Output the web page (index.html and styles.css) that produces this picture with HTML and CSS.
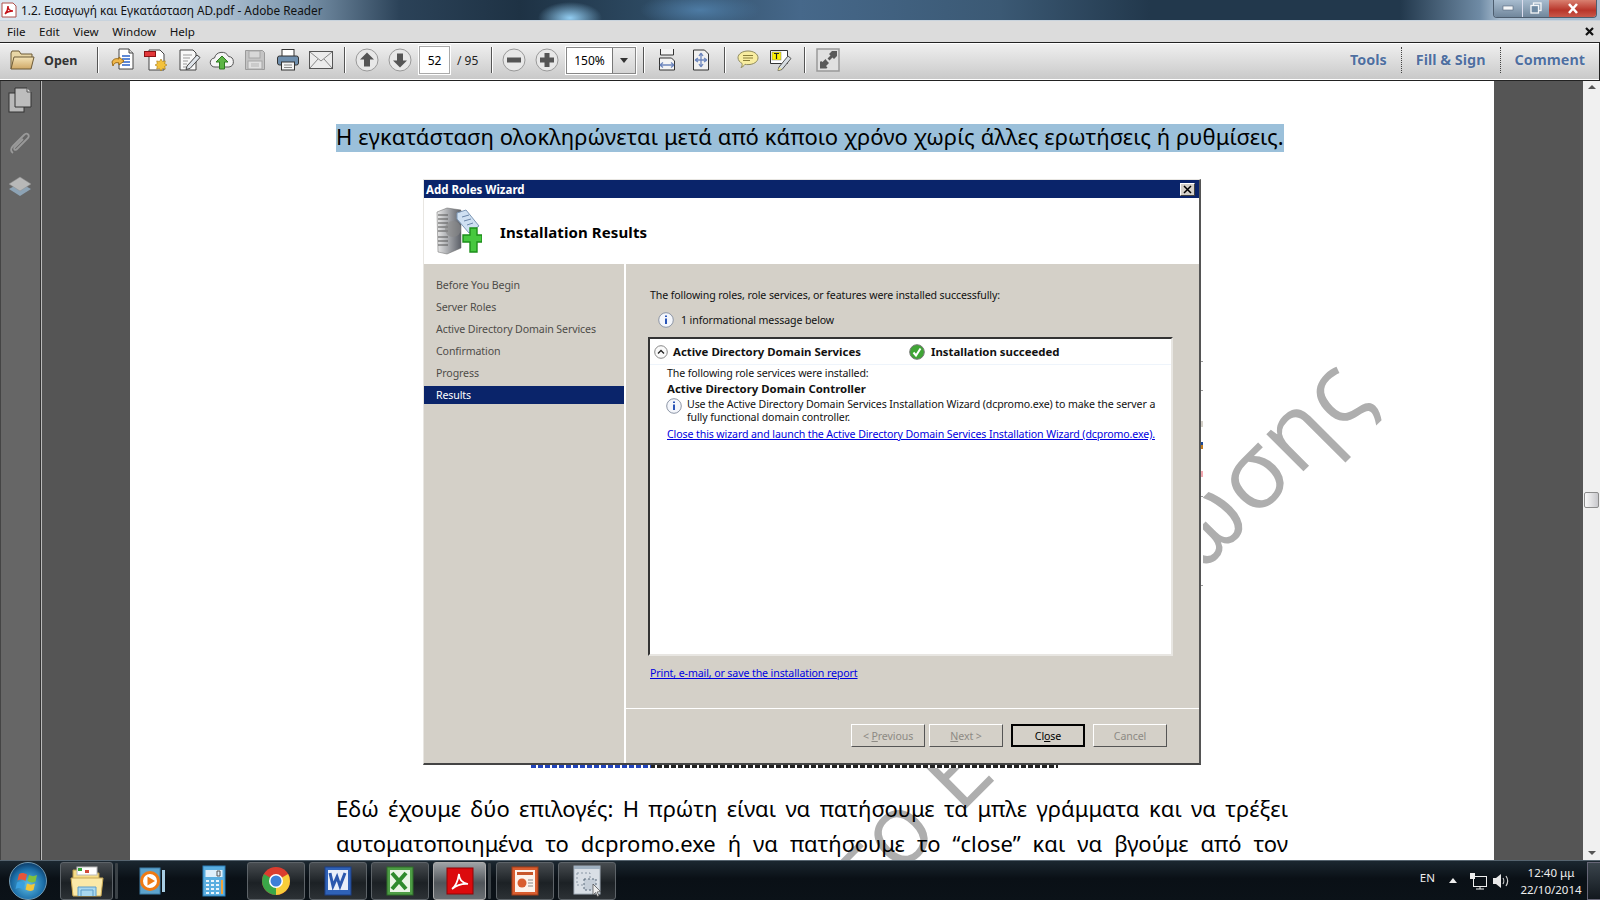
FILE: index.html
```html
<!DOCTYPE html>
<html lang="el">
<head>
<meta charset="utf-8">
<title>Adobe Reader</title>
<link rel="stylesheet" href="styles.css">
</head>
<body>
<header class="titlebar">
  <svg class="app-icon" width="16" height="16" viewBox="0 0 16 16"><path d="M1 1h11l3 3v11H1z" fill="#fff" stroke="#b0504a"/><path d="M4 12c2-2 3-5 3-8 0 3 2 5 5 5-3 0-6 1-8 3z" fill="none" stroke="#c4141a" stroke-width="1.4"/></svg>
  <span class="title-text">1.2. Εισαγωγή και Εγκατάσταση AD.pdf - Adobe Reader</span>
  <div class="win-btns">
    <span class="win-btn win-min"><svg width="12" height="6" viewBox="0 0 12 6"><rect x="1" y="1" width="10" height="4" fill="#f4f6f8" stroke="#56657a" stroke-width=".6"/></svg></span>
    <span class="win-btn win-max"><svg width="12" height="12" viewBox="0 0 12 12"><rect x="3.5" y="1" width="7.500" height="7.500" fill="none" stroke="#f4f6f8" stroke-width="1.3"/><rect x="1" y="3.500" width="7.500" height="7.500" fill="#6f8aa3" stroke="#f4f6f8" stroke-width="1.3"/></svg></span>
    <span class="win-btn win-close"><svg width="12" height="11" viewBox="0 0 12 11"><path d="M2 1l8 9M10 1l-8 9" stroke="#fff" stroke-width="2.600"/></svg></span>
  </div>
</header>

<nav class="menubar">
  <span class="menu-item">File</span><span class="menu-item">Edit</span><span class="menu-item">View</span><span class="menu-item">Window</span><span class="menu-item">Help</span>
  <svg class="menu-close" width="9" height="9" viewBox="0 0 9 9"><path d="M1 1l7 7M8 1l-7 7" stroke="#111" stroke-width="2.200"/></svg>
</nav>

<div class="toolbar">
  <svg class="folder" width="26" height="22" viewBox="0 0 26 22"><defs><linearGradient id="fg" x1="0" y1="0" x2="0" y2="1"><stop offset="0" stop-color="#f4e4b8"/><stop offset="1" stop-color="#cfa866"/></linearGradient></defs><path d="M2 20V4l1-2h7l2 3h11v3" fill="#e8d6a6" stroke="#6d5a36"/><path d="M2 20L5 8h20l-3 12z" fill="url(#fg)" stroke="#6d5a36"/></svg>
  <span class="open-label">Open</span>
  <span class="sep"></span>
  <span class="tb-btn"><svg width="26" height="26" viewBox="0 0 26 26"><path d="M9 2h10l4 4v16H9z" fill="#fff" stroke="#444"/><path d="M19 2v4h4" fill="#ddd" stroke="#444"/><path d="M12 9h8M12 12h8M12 15h8M12 18h8" stroke="#2a62c8" stroke-width="1.300"/><path d="M2 15c1-3 4-4 7-3v-2l5 4-5 4v-2c-3-1-5 0-6 3z" fill="#f1b84a" stroke="#9a6a16"/></svg></span>
  <span class="tb-btn"><svg width="26" height="26" viewBox="0 0 26 26"><path d="M6 3h11l4 4v16H6z" fill="#fff" stroke="#444"/><rect x="1.500" y="4.500" width="11" height="5" fill="#e2373a" stroke="#8a1214"/><path d="M18 12l1.500 2.500 2.800-.6-.6 2.800 2.300 1.300-2.300 1.300.6 2.800-2.800-.6-1.500 2.500-1.500-2.500-2.800.6.6-2.800-2.300-1.300 2.300-1.300-.6-2.800 2.800.6z" fill="#f4c23c" stroke="#a87b12" stroke-width=".6"/></svg></span>
  <span class="tb-btn"><svg width="26" height="26" viewBox="0 0 26 26"><path d="M4 3h13l3 3v17H4z" fill="#f8f8f8" stroke="#444"/><path d="M7 8h9M7 11h7M7 14h5M7 17h4M7 20h3" stroke="#999"/><path d="M11 19l10-11 3 2.500-10 11-4 1z" fill="#dfe4ea" stroke="#444"/></svg></span>
  <span class="tb-btn"><svg width="26" height="24" viewBox="0 0 26 24"><path d="M6 19a4.500 4.500 0 0 1-.5-9 7.500 7.500 0 0 1 14-1.500A5.300 5.300 0 0 1 20 19z" fill="#f4f4f4" stroke="#555"/><path d="M13 8l6 6h-3.500v7h-5v-7H7z" fill="#5db545" stroke="#2e7a20"/></svg></span>
  <span class="tb-btn"><svg width="22" height="22" viewBox="0 0 22 22"><path d="M1.500 1.500h17l2 2v17h-19z" fill="#c4c4c4" stroke="#9a9a9a"/><rect x="5" y="2" width="11" height="7" fill="#d8d8d8" stroke="#a6a6a6"/><rect x="4" y="12" width="14" height="8" fill="#e0e0e0" stroke="#a6a6a6"/><path d="M7 15h8M7 17h8" stroke="#b5b5b5"/></svg></span>
  <span class="tb-btn"><svg width="24" height="24" viewBox="0 0 24 24"><rect x="6" y="1.500" width="12" height="7" fill="#fff" stroke="#333"/><rect x="1.500" y="8" width="21" height="9" rx="2" fill="#6f8fae" stroke="#333"/><rect x="5.500" y="14" width="13" height="8" fill="#f2f2f2" stroke="#333"/><path d="M8 17h8M8 19.500h8" stroke="#888"/></svg></span>
  <span class="tb-btn"><svg width="24" height="18" viewBox="0 0 24 18"><rect x=".5" y=".5" width="23" height="17" fill="#ececec" stroke="#555"/><path d="M1 1l11 9 11-9M1 17l8-9M23 17l-8-9" fill="none" stroke="#888"/></svg></span>
  <span class="sep"></span>
  <span class="tb-btn"><svg width="24" height="24" viewBox="0 0 24 24"><circle cx="12" cy="12" r="11" fill="#e8e8e8" stroke="#999"/><path d="M12 4.500l7 7h-4v7H9v-7H5z" fill="#555"/></svg></span>
  <span class="tb-btn"><svg width="24" height="24" viewBox="0 0 24 24"><circle cx="12" cy="12" r="11" fill="#e8e8e8" stroke="#999"/><path d="M12 19.500l-7-7h4v-7h6v7h4z" fill="#555"/></svg></span>
  <span class="page-input">52</span>
  <span class="page-total">/ 95</span>
  <span class="sep"></span>
  <span class="tb-btn"><svg width="24" height="24" viewBox="0 0 24 24"><circle cx="12" cy="12" r="11" fill="#e8e8e8" stroke="#999"/><rect x="5" y="9.500" width="14" height="5" fill="#555"/></svg></span>
  <span class="tb-btn"><svg width="24" height="24" viewBox="0 0 24 24"><circle cx="12" cy="12" r="11" fill="#e8e8e8" stroke="#999"/><path d="M9.500 5h5v4.500H19v5h-4.500V19h-5v-4.500H5v-5h4.500z" fill="#555"/></svg></span>
  <span class="zoom-combo"><span class="zoom-value">150%</span><span class="zoom-arrow"></span></span>
  <span class="sep"></span>
  <span class="tb-btn tb-wide"><svg width="18" height="22" viewBox="0 0 18 22"><path d="M2.500 0v6h13V0" fill="#f4f4f4" stroke="#333"/><path d="M1.500 9h12l3 3v9h-15z" fill="#f4f4f4" stroke="#333"/><path d="M2 16h14M2 16l3-2.500M2 16l3 2.500M16 16l-3-2.500M16 16l-3 2.500" fill="none" stroke="#6d86bd" stroke-width="1.300"/></svg></span>
  <span class="tb-btn"><svg width="18" height="22" viewBox="0 0 18 22"><path d="M1.500 1h11l4 4v16h-15z" fill="#f0f0f0" stroke="#333"/><path d="M9 4v14M3 11h12M9 4L7 7M9 4l2 3M9 18l-2-3M9 18l2-3M3 11l3-2M3 11l3 2M15 11l-3-2M15 11l-3 2" fill="none" stroke="#6d86bd" stroke-width="1.300"/></svg></span>
  <span class="sep sep-roomy"></span>
  <span class="tb-btn"><svg width="22" height="20" viewBox="0 0 22 20"><path d="M11 1c5.500 0 10 2.800 10 6.800s-4.500 6.800-10 6.800c-1 0-2 0-3-.3-1 1.500-2.500 2.700-4 3.200 1-1 1.300-2.500 1.100-4C3 12.300 1 10.200 1 7.800 1 3.800 5.500 1 11 1z" fill="#f8eda0" stroke="#8f8a5c"/><path d="M6 5.500h10M6 8h10M6 10.500h7" stroke="#8a7f3a"/></svg></span>
  <span class="tb-btn"><svg width="22" height="22" viewBox="0 0 22 22"><path d="M.5 1.500h17v13H.5z" fill="#fff" stroke="#333"/><rect x="2" y="3" width="9" height="8" fill="#fdf000" stroke="#777" stroke-width=".5"/><path d="M4 4.500h5M6.500 4.500v5.500" stroke="#222" stroke-width="1.200"/><path d="M9 18l9-11 3 2.500-9 11-4 1z" fill="#d7dde2" stroke="#555"/><path d="M8 21.500l1-3 3 1.500z" fill="#f3e77e"/></svg></span>
  <span class="sep sep-roomy"></span>
  <span class="tb-btn"><svg width="24" height="24" viewBox="0 0 24 24"><rect x="1" y="1" width="22" height="22" fill="#e0e0e0" stroke="#999" stroke-width="1.500"/><path d="M13 6l3-3h5v5l-3 3-1.500-1.500-3 3-2-2 3-3zM11 13l2 2-3 3 1.500 1.500-1 1H4v-6.500l1-1L6.500 14l3-3z" fill="#5a5a5a"/></svg></span>
  <div class="panel-links">
    <span class="panel-link">Tools</span><span class="panel-link">Fill &amp; Sign</span><span class="panel-link">Comment</span>
  </div>
</div>

<main class="workspace">
  <aside class="rail">
    <svg width="24" height="26" viewBox="0 0 24 26"><rect x="1" y="6" width="15" height="19" fill="#b9b9b9" stroke="#333"/><path d="M7 1h12l4 4v15H7z" fill="#bdbdbd" stroke="#333"/><path d="M19 1v4h4" fill="#ddd" stroke="#555"/></svg>
    <svg width="22" height="24" viewBox="0 0 22 24"><path d="M4 21c-3-2-2-5 0-7L15 3c3-3 6 0 4 3L8 17c-2 2-4 0-2-2l8-8" fill="none" stroke="#9a9a9a" stroke-width="1.800"/></svg>
    <svg width="24" height="24" viewBox="0 0 24 24"><path d="M1 14l11-6 11 6-11 7z" fill="#8da3b5"/><path d="M1 9l11-7 11 7-11 7z" fill="#b8b8b8" stroke="#8c8c8c" stroke-width=".5"/></svg>
  </aside>
  <div class="gutter gutter-left"></div>
  <article class="page">
    <div class="watermark">στο Ενημέρωσης</div>
    <p class="lead"><span class="selected">Η εγκατάσταση ολοκληρώνεται μετά από κάποιο χρόνο χωρίς άλλες ερωτήσεις ή ρυθμίσεις.</span></p>

    <section class="wizard">
      <span class="wiz-residue"></span>
      <div class="wiz-title"><span>Add Roles Wizard</span>
        <span class="wiz-x"><svg width="9" height="9" viewBox="0 0 9 9"><path d="M1 1l7 7M8 1l-7 7" stroke="#000" stroke-width="1.500"/></svg></span>
      </div>
      <div class="wiz-header">
        <svg width="46" height="48" viewBox="0 0 46 48"><defs><linearGradient id="sv" x1="0" y1="0" x2="1" y2="0"><stop offset="0" stop-color="#e8e8e8"/><stop offset="1" stop-color="#5c6068"/></linearGradient></defs><path d="M1 5l10-4 14 2v38l-14 6-9-2z" fill="url(#sv)" stroke="#666" stroke-width=".5"/><path d="M2 8h10M2 12h10M2 16h10M2 20h10M2 24h10M2 30h10M2 34h10M2 38h10" stroke="#555"/><circle cx="17" cy="22" r="8" fill="#888" opacity=".6"/><path d="M21 6l9-3 13 16-10 7-12-14z" fill="#cfe0f2" stroke="#7d97b5"/><path d="M26 10l7-2M28 14l7-2M31 18l6-2" stroke="#6a85a8"/><path d="M27 28h7v-7h7v7h5v7h-5v10h-7V35h-7z" fill="#47c83f" stroke="#1d8f1a" stroke-width="1.400"/></svg>
        <h1>Installation Results</h1>
      </div>
      <div class="wiz-body">
        <ul class="wiz-nav">
          <li>Before You Begin</li><li>Server Roles</li><li>Active Directory Domain Services</li><li>Confirmation</li><li>Progress</li><li class="current">Results</li>
        </ul>
        <div class="wiz-main">
          <div class="wiz-content">
            <p class="intro">The following roles, role services, or features were installed successfully:</p>
            <p class="msg"><svg width="16" height="16" viewBox="0 0 16 16"><circle cx="8" cy="8" r="7.300" fill="#f4f6fb" stroke="#8d96a6"/><path d="M8 3.500v1.600M8 6.500v5.500" stroke="#2a55b8" stroke-width="2"/></svg>1 informational message below</p>
            <div class="result-box">
              <div class="result-head">
                <svg width="14" height="14" viewBox="0 0 14 14"><circle cx="7" cy="7" r="6.300" fill="#fafafa" stroke="#888"/><path d="M4 8.500l3-3 3 3" fill="none" stroke="#222" stroke-width="1.300"/></svg>
                <b class="result-name">Active Directory Domain Services</b>
                <svg width="16" height="16" viewBox="0 0 16 16"><circle cx="8" cy="8" r="7.300" fill="#3fa535" stroke="#777"/><path d="M4.500 8.500l2.500 3 4.500-7" fill="none" stroke="#fff" stroke-width="2"/></svg>
                <b class="result-status">Installation succeeded</b>
              </div>
              <div class="result-detail">
                <p class="line">The following role services were installed:</p>
                <p class="line"><b>Active Directory Domain Controller</b></p>
                <div class="note">
                  <svg width="16" height="16" viewBox="0 0 16 16"><circle cx="8" cy="8" r="7.300" fill="#f4f6fb" stroke="#8d96a6"/><path d="M8 3.500v1.600M8 6.500v5.500" stroke="#2a55b8" stroke-width="2"/></svg>
                  <p>Use the Active Directory Domain Services Installation Wizard (dcpromo.exe) to make the server a fully functional domain controller.</p>
                </div>
                <a class="link wizard-link" href="#">Close this wizard and launch the Active Directory Domain Services Installation Wizard (dcpromo.exe).</a>
              </div>
            </div>
            <a class="link report-link" href="#">Print, e-mail, or save the installation report</a>
          </div>
          <div class="wiz-buttons">
            <span class="btn disabled">&lt; <u>P</u>revious</span>
            <span class="btn disabled"><u>N</u>ext &gt;</span>
            <span class="btn default">Cl<u>o</u>se</span>
            <span class="btn disabled">Cancel</span>
          </div>
        </div>
      </div>
    </section>
    <div class="cut-line"></div>

    <p class="body-text">Εδώ έχουμε δύο επιλογές: Η πρώτη είναι να πατήσουμε τα μπλε γράμματα και να τρέξει αυτοματοποιημένα το dcpromo.exe ή να πατήσουμε το “close” και να βγούμε από τον</p>
  </article>
  <div class="gutter gutter-right"></div>
  <div class="scrollbar">
    <span class="arrow-up"></span>
    <span class="thumb"></span>
    <span class="arrow-down"></span>
  </div>
</main>

<footer class="taskbar">
  <span class="orb"><svg width="40" height="40" viewBox="0 0 40 40"><defs><radialGradient id="orb" cx=".5" cy=".6" r=".6"><stop offset="0" stop-color="#5fc0e8"/><stop offset=".7" stop-color="#1c6ea8"/><stop offset="1" stop-color="#0b3a66"/></radialGradient></defs><circle cx="20" cy="20" r="18.500" fill="url(#orb)" stroke="#8ab4cc" stroke-width=".8"/><path d="M11 13c3-1.500 5-1 8 .5l-1.500 6.500c-3-1.500-5-2-8-.5z" fill="#e8553a"/><path d="M21 14c3 1.500 5 1.500 8 0l-1.500 6.500c-3 1.500-5 1-8-.5z" fill="#7fc13f"/><path d="M9 21.500c3-1.500 5-1 8 .5l-1.500 6.500c-3-1.500-5-2-8-.5z" fill="#3aa0e0"/><path d="M19 22.500c3 1.500 5 1.500 8 0l-1.500 6.500c-3 1.500-5 1-8-.5z" fill="#f3c63a"/></svg></span>
  <span class="task task-narrow"><svg width="34" height="34" viewBox="0 0 34 34"><path d="M3 31V6h10l2 3h14v22z" fill="#f6dc86" stroke="#b89a48"/><rect x="7" y="3" width="20" height="8" fill="#fff" stroke="#bbb"/><path d="M8 4h4v3H8z" fill="#35a535"/><path d="M15 6h4v3h-4z" fill="#d24a3a"/><path d="M1 14h32l-2 18H3z" fill="#fbe9a8" stroke="#c8a856"/><path d="M8 32V23h18v9M11 32v-6h12v6" fill="#a8d8f0" stroke="#5d9cc8"/></svg></span>
  <span class="divider"></span>
  <span class="task task-plain"><svg width="28" height="30" viewBox="0 0 28 30"><rect x="2" y="2" width="20" height="26" fill="#5da3cc" stroke="#3e7ea8"/><rect x="24" y="4" width="3" height="22" fill="#a8cde3"/><circle cx="12" cy="15" r="8.500" fill="#fff" stroke="#ee7a14" stroke-width="3"/><path d="M9.500 10.500l7.500 4.500-7.500 4.500z" fill="#ee7a14"/></svg></span>
  <span class="task task-plain"><svg width="24" height="32" viewBox="0 0 24 32"><rect x="1" y="1" width="22" height="30" fill="#5aaee0" stroke="#2d7fb8"/><rect x="3.500" y="5" width="17" height="7" fill="#dfeffa"/><path d="M15 6h3v5h-3z" fill="none" stroke="#555"/><path d="M4 15h3v2H4zM9 15h3v2H9zM14 15h3v2h-3zM4 19h3v2H4zM9 19h3v2H9zM14 19h3v2h-3zM4 23h3v2H4zM9 23h3v2H9zM14 23h3v2h-3zM4 27h3v2H4zM9 27h3v2H9zM14 27h3v2h-3z" fill="#e9f4fb"/><path d="M19 15h2v14h-2z" fill="#f2a33a"/></svg></span>
  <span class="task"><svg width="30" height="30" viewBox="0 0 30 30"><circle cx="15" cy="15" r="14" fill="#db3d2f"/><path d="M15 15L27.100 8a14 14 0 0 1-12.100 21z" fill="#f7cd3a"/><path d="M15 15L15 29A14 14 0 0 1 2.900 8z" fill="#3aa648"/><circle cx="15" cy="15" r="7" fill="#fff"/><circle cx="15" cy="15" r="5.500" fill="#3d7fd8"/></svg></span>
  <span class="task"><svg width="28" height="30" viewBox="0 0 28 30"><rect x="1" y="1" width="26" height="28" fill="#2f62b8" stroke="#1c3f85"/><rect x="4" y="4" width="20" height="20" fill="#e9eff9"/><path d="M6 7l3 13 4-9 3 9 5-13" fill="none" stroke="#2b58ad" stroke-width="3"/></svg></span>
  <span class="task"><svg width="28" height="30" viewBox="0 0 28 30"><rect x="1" y="1" width="26" height="28" fill="#4d9c45" stroke="#2e6d28"/><rect x="4" y="4" width="20" height="22" fill="#eaf4e6"/><path d="M6 7l14 16M20 7L6 23" stroke="#2f8a2d" stroke-width="4"/></svg></span>
  <span class="task task-active task-narrow"><svg width="28" height="28" viewBox="0 0 28 28"><rect x="1" y="1" width="26" height="26" fill="#dc0a0d" stroke="#8e0507"/><path d="M6 22c4-3 6-9 7-15 0 5 3 9 9 10-6-.500-11 1-16 5z" fill="none" stroke="#fff" stroke-width="1.700"/></svg></span>
  <span class="divider"></span>
  <span class="task"><svg width="28" height="30" viewBox="0 0 28 30"><rect x="1" y="1" width="26" height="28" fill="#d95d2f" stroke="#a13c18"/><rect x="4" y="4" width="20" height="22" fill="#fdf2eb"/><rect x="6" y="6" width="16" height="3" fill="#c8562a"/><circle cx="11" cy="17" r="4.500" fill="#d95d2f"/><path d="M17 14h5M17 17h5M17 20h5" stroke="#888"/></svg></span>
  <span class="task"><svg width="30" height="32" viewBox="0 0 30 32"><rect x="2" y="1" width="26" height="28" fill="#d9dfe6" stroke="#a5b0bb"/><rect x="2" y="1" width="26" height="3" fill="#9fb0c0"/><path d="M5 8h13v12H5z" fill="none" stroke="#8a97a5" stroke-dasharray="2 2"/><path d="M12 14h12v11H12z" fill="#c5ced8" stroke="#5a6a7a" stroke-dasharray="2 2"/><path d="M21 19v11l2.500-2.500 2 4 1.500-.8-2-3.700 3.500-.5z" fill="#eee" stroke="#444" stroke-width=".7"/></svg></span>
  <div class="tray">
    <span class="lang">EN</span>
    <span class="tray-arrow"></span>
    <svg width="20" height="18" viewBox="0 0 20 18"><rect x="5.500" y="4.500" width="13" height="10" fill="none" stroke="#eee"/><path d="M8 17h8M12 15v2" stroke="#eee"/><rect x="2" y="1" width="5" height="6" fill="#eee"/></svg>
    <svg class="speaker" width="18" height="16" viewBox="0 0 18 16"><path d="M1 5h3l5-4v14l-5-4H1z" fill="#e8e8e8"/><path d="M11 5c1 1.500 1 4.500 0 6M14 3c2 3 2 7 0 10" fill="none" stroke="#cfcfcf" stroke-width="1.200"/></svg>
    <div class="clock"><span>12:40 μμ</span><span>22/10/2014</span></div>
    <span class="show-desktop"></span>
  </div>
</footer>
</body>
</html>
```

FILE: styles.css
```css
* { box-sizing: border-box; }
html, body { margin: 0; padding: 0; }
body {
  width: 1600px;
  height: 900px;
  overflow: hidden;
  display: flex;
  flex-direction: column;
  font-family: "Noto Sans", "Liberation Sans", sans-serif;
  background: #555;
}
p, ul, h1 { margin: 0; padding: 0; }

/* Window title */
.titlebar {
  height: 21px;
  flex: none;
  display: flex;
  align-items: center;
  position: relative;
  padding-left: 1px;
  border-bottom: 1px solid #c8d3dd;
  background:
    radial-gradient(ellipse 32px 16px at 570px 18px, #92cdf2 0, rgba(146,205,242,0) 100%),
    radial-gradient(ellipse 60px 18px at 700px 10px, #4d7ba4 0, rgba(77,123,164,0) 100%),
    linear-gradient(90deg, #dbe6ef 0, #c5d5e3 180px, #7c96ad 300px, #2b4258 400px, #1e3244 520px, #2c4860 640px, #46688a 800px, #3b5974 1000px, #22384c 1150px, #22384c 1400px, #6f8ba5 1480px, #a9bdd0 1500px);
}
.app-icon { margin-right: 4px; }
.title-text { font-size: 11.8px; color: #111; }
.win-btns { margin-left: auto; margin-right: 3px; margin-top: -3px; display: flex; height: 18px; border: 1px solid #4d5d6e; border-top: 0; border-radius: 0 0 4px 4px; overflow: hidden; }
.win-btn { display: flex; align-items: center; justify-content: center; }
.win-min { width: 29px; background: linear-gradient(#a8bccf, #71879c); border-right: 1px solid #dde; }
.win-max { width: 26px; background: linear-gradient(#a8bccf, #71879c); }
.win-close { width: 47px; background: linear-gradient(#d98070, #b8352a 60%, #c8584a); }

/* Menu */
.menubar {
  height: 21px;
  flex: none;
  display: flex;
  align-items: center;
  background: #dcdcdc;
  font-size: 11.6px;
  color: #111;
  padding-left: 7px;
}
.menu-item { margin-right: 13.5px; }
.menu-close { margin-left: auto; margin-right: 6px; }

/* Toolbar */
.toolbar {
  height: 39px;
  flex: none;
  display: flex;
  align-items: center;
  padding: 0 0 3px 9px;
  border: 1px solid #222;
  border-left: 0;
  box-shadow: inset 0 1px 0 #fff, inset 0 -1px 0 #fff;
  background: linear-gradient(#f0f0f0, #c8c8c8);
}
.open-label { font-size: 12.5px; font-weight: 700; color: #333; margin-left: 9px; width: 43px; }
.sep { width: 2px; height: 26px; margin: 0 4px 0 7px; background: #555; border-right: 1px solid #fff; flex: none; }
.sep-roomy { margin-right: 5px; }
.open-label + .sep { margin: 0 7px 0 10px; }
.tb-btn { width: 33px; height: 30px; display: flex; align-items: center; justify-content: center; flex: none; }
.tb-wide { width: 35px; }
.page-input {
  width: 31px; height: 28px; margin-left: 3px;
  display: flex; align-items: center; justify-content: center;
  background: #fff; border: 1px solid #aaa;
  outline: 1px solid #fff;
  font-size: 12px; color: #000;
}
.page-total { font-size: 12px; color: #222; margin-left: 7px; width: 27px; white-space: nowrap; }
.zoom-combo { margin-left: 3px; width: 70px; height: 27px; display: flex; background: #fff; border: 1px solid #888; outline: 1px solid #fff; }
.zoom-value { width: 45px; font-size: 12px; text-align: center; line-height: 25px; color: #000; }
.zoom-arrow { flex: 1; position: relative; background: linear-gradient(#eee, #d4d4d4); border-left: 1px solid #777; }
.zoom-arrow::after { content: ""; position: absolute; left: 7px; top: 10px; border: 4px solid transparent; border-top: 5px solid #333; border-bottom: 0; }
.panel-links { margin-left: auto; display: flex; align-items: center; height: 26px; }
.panel-link { font-size: 14.4px; font-weight: 700; color: #4f6f9f; text-shadow: 0 0 1px #fff; padding: 0 14px; border-left: 1px dotted #444; line-height: 26px; }
.panel-link:first-child { border-left: 0; }

/* Workspace */
.workspace { flex: 1; min-height: 0; display: flex; }
.rail {
  width: 42px; flex: none;
  background: #666;
  border-left: 1px solid #444;
  border-right: 1px solid #bbb;
  box-shadow: inset -1px 0 0 #333;
  display: flex; flex-direction: column; align-items: center;
  gap: 19px; padding: 6px 3px 0 0;
}
.gutter { background: #555; flex: none; }
.gutter-left { width: 88px; }
.gutter-right { width: 89px; }
.page {
  width: 1364px;
  flex: none;
  background: #fff;
  position: relative;
  overflow: hidden;
  padding-left: 206px;
  color: #000;
}
.watermark {
  position: absolute;
  right: 146px;
  top: 242px;
  width: 1100px;
  text-align: right;
  font-family: "Open Sans", sans-serif;
  font-size: 98px;
  letter-spacing: 1px;
  line-height: 100px;
  color: #aeaeae;
  white-space: nowrap;
  transform: rotate(-45deg);
  transform-origin: 100% 50%;
}
.lead { position: relative; display: flex; font-size: 22px; padding-top: 43px; white-space: nowrap; letter-spacing: .08px; }
.selected { background: #9bc0da; line-height: 25px; padding-bottom: 3px; }

/* Wizard */
.wizard {
  position: relative;
  width: 778px;
  height: 586px;
  margin: 27px 0 0 87px;
  background: #d4d0c8;
  border: 1px solid #e8e6e2;
  border-right: 2px solid #555;
  border-bottom: 2px solid #444;
  font-family: "Noto Sans", sans-serif;
  font-size: 10.6px;
  letter-spacing: -.11px;
  color: #111;
  display: flex;
  flex-direction: column;
}
.wiz-residue {
  position: absolute;
  left: 100%;
  top: 0;
  margin-left: 2px;
  width: 2px;
  height: 100%;
  background: linear-gradient(#fff 0 181px, #999 181px 182px, #fff 182px 210px, #999 210px 211px, #fff 211px 241px, #d4d0c8 241px 247px, #fff 247px 262px, #1a4a9a 262px 265px, #c07a20 265px 269px, #fff 269px 291px, #f2a8b0 291px 297px, #fff 297px 316px, #999 316px 317px, #fff 317px 405px, #999 405px 406px, #fff 406px);
}
.wiz-title {
  height: 18px; flex: none;
  background: #0a246a; color: #fff;
  font-weight: 700; font-size: 11.5px;
  letter-spacing: 0;
  padding-left: 2px;
  display: flex; align-items: center; justify-content: space-between;
}
.wiz-x { width: 15px; height: 13px; margin-right: 4px; background: #d4d0c8; border: 1px solid #fff; border-right-color: #404040; border-bottom-color: #404040; display: flex; align-items: center; justify-content: center; }
.wiz-header { height: 66px; flex: none; background: #fff; display: flex; align-items: center; padding-left: 12px; gap: 18px; }
.wiz-header h1 { font-size: 15px; font-weight: 700; color: #000; line-height: 20px; letter-spacing: .1px; margin-top: 1px; }
.wiz-body { flex: 1; display: flex; min-height: 0; }
.wiz-nav { width: 200px; flex: none; list-style: none; padding-top: 10px; color: #4e4c48; }
.wiz-nav li { height: 22px; line-height: 22px; padding-left: 12px; }
.wiz-nav li.current { height: 18px; line-height: 18px; margin-top: 2px; background: #0a246a; color: #fff; }
.wiz-main { flex: 1; display: flex; flex-direction: column; border-left: 2px solid #fff; min-width: 0; }
.wiz-content { flex: 1; padding-left: 24px; padding-top: 23px; border-bottom: 1px solid #fff; height: 0; }
.intro { line-height: 16px; }
.msg { display: flex; align-items: center; gap: 7px; margin: 9px 0 0 8px; line-height: 16px; }
.result-box {
  width: 525px; height: 319px;
  margin: 9px 0 0 -2px;
  background: #fff;
  border: 2px solid #e8e6e2;
  border-left-color: #333;
  border-top-color: #333;
}
.result-head { height: 26px; display: flex; align-items: center; padding-left: 4px; border-bottom: 1px solid #eef4fb; font-size: 11.4px; letter-spacing: 0; }
.result-name { margin-left: 5px; width: 236px; white-space: nowrap; font-weight: 700; }
.result-status { margin-left: 6px; white-space: nowrap; font-weight: 700; }
.result-detail { padding: 0 0 0 17px; }
.line { line-height: 16px; }
.line b { font-size: 11.4px; letter-spacing: 0; }
.note { display: flex; gap: 5px; margin: 0 0 0 -1px; line-height: 13px; padding-top: 1px; }
.note svg { flex: none; }
.note p { width: 470px; }
.link { color: #0000e0; text-decoration: underline; }
.wizard-link { display: block; margin-top: 2px; line-height: 16px; white-space: nowrap; }
.report-link { display: block; margin-top: 9px; line-height: 16px; }
.wiz-buttons { height: 54px; flex: none; display: flex; padding: 15px 0 0 225px; }
.btn {
  width: 74px; height: 23px; margin-right: 4px;
  display: flex; align-items: center; justify-content: center;
  background: #d4d0c8;
  border: 1px solid #fff;
  border-right-color: #555; border-bottom-color: #555;
  color: #000;
  white-space: pre;
}
.btn.disabled { color: #8d8a84; }
.btn.default { border: 2px solid #000; margin: 0 8px 0 4px; }
.cut-line {
  position: relative;
  height: 3px; width: 527px;
  margin-left: 195px;
  background: repeating-linear-gradient(90deg, rgba(255,255,255,0) 0 5px, #fff 5px 7px), linear-gradient(90deg, #2244bb 0 120px, #222 120px);
}
.body-text {
  position: relative;
  width: 952px;
  margin-top: 23px;
  font-size: 22px;
  line-height: 35px;
  text-align: justify;
  text-align-last: justify;
}

/* Scrollbar */
.scrollbar { width: 17px; flex: none; background: #f0f0f0; position: relative; }
.arrow-up, .arrow-down { position: absolute; left: 5px; border: 4px solid transparent; }
.arrow-up { top: 4px; border-bottom: 4px solid #555; border-top: 0; }
.arrow-down { bottom: 5px; border-top: 4px solid #555; border-bottom: 0; }
.thumb { position: absolute; left: 1px; top: 411px; width: 15px; height: 16px; border: 1px solid #8c8c8c; border-radius: 2px; background: linear-gradient(90deg, #fafafa, #c8c8cc); }

/* Taskbar */
.taskbar {
  height: 40px; flex: none;
  display: flex; align-items: center;
  gap: 4px;
  background: linear-gradient(#1b2730, #0a1016 45%, #0b1218);
  border-top: 1px solid #56646f;
  color: #eee;
}
.orb { width: 56px; display: flex; justify-content: center; flex: none; margin-left: 0; }
.task {
  width: 58px; height: 38px; flex: none;
  display: flex; align-items: center; justify-content: center;
  border-radius: 3px;
  border: 1px solid #5d6368;
  background: linear-gradient(#474c50, #1c2125 55%, #2c3135);
}
.task-narrow { width: 53px; }
.task-plain { border-color: transparent; background: none; }
.task-active { background: linear-gradient(#9ea2a5, #50555a 55%, #6a6f73); border-color: #aaa; }
.divider { width: 3px; height: 36px; background: #3a4146; border-radius: 1px; flex: none; margin: 0 1px 0 -2px; }
.tray { margin-left: auto; display: flex; align-items: center; font-size: 11.5px; height: 100%; }
.lang { margin-right: 14px; margin-top: -6px; }
.tray-arrow { border: 4px solid transparent; border-bottom: 5px solid #eee; border-top: 0; margin-right: 11px; }
.speaker { margin-left: 4px; }
.clock { width: 72px; margin-left: 5px; display: flex; flex-direction: column; align-items: center; line-height: 17px; }
.show-desktop { width: 13px; height: 38px; border: 1px solid #667; border-right: 0; background: linear-gradient(#3a444c, #12181e); }
```
